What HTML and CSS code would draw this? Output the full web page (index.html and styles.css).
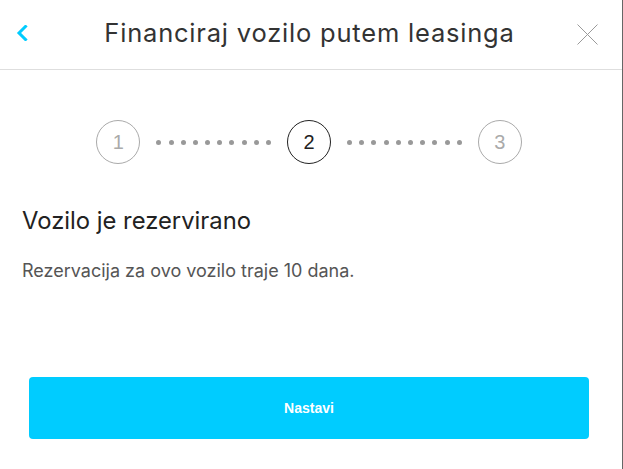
FILE: index.html
```html
<!DOCTYPE html>
<html lang="hr">
<head>
<meta charset="utf-8">
<link rel="stylesheet" href="styles.css">
</head>
<body>
<div class="modal">
  <header class="header">
    <button class="back" aria-label="Natrag">
      <svg width="12" height="16" viewBox="0 0 12 16"><path d="M9.5 1.5 L3 8 L9.5 14.5" fill="none" stroke="#00ccff" stroke-width="3" stroke-linecap="square"/></svg>
    </button>
    <h1 class="title">Financiraj vozilo putem leasinga</h1>
    <button class="close" aria-label="Zatvori">
      <svg width="21" height="21" viewBox="0 0 21 21"><path d="M0.5 0.5 L20.5 20.5 M20.5 0.5 L0.5 20.5" stroke="#9a9a9a" stroke-width="1"/></svg>
    </button>
  </header>
  <div class="steps">
    <div class="step">1</div>
    <div class="dots"><i></i><i></i><i></i><i></i><i></i><i></i><i></i><i></i><i></i><i></i></div>
    <div class="step active">2</div>
    <div class="dots"><i></i><i></i><i></i><i></i><i></i><i></i><i></i><i></i><i></i><i></i></div>
    <div class="step">3</div>
  </div>
  <section class="content">
    <h2 class="heading">Vozilo je rezervirano</h2>
    <p class="text">Rezervacija za ovo vozilo traje 10 dana.</p>
  </section>
  <div class="actions">
    <button class="primary">Nastavi</button>
  </div>
</div>
</body>
</html>
```
FILE: styles.css
```css
*, *::before, *::after {
  box-sizing: border-box;
}
html, body {
  margin: 0;
  padding: 0;
  background: #fff;
}
body {
  font-family: Inter, "Liberation Sans", Arial, sans-serif;
  width: 623px;
  height: 469px;
  overflow: hidden;
}
.modal {
  width: 623px;
  height: 469px;
  border-right: 1px solid #666;
  display: flex;
  flex-direction: column;
}
.header {
  height: 70px;
  flex: none;
  border-bottom: 1px solid #dedede;
  display: flex;
  align-items: center;
  justify-content: space-between;
  padding: 0 24px 4px 16px;
}
.header button {
  background: none;
  border: 0;
  padding: 0;
  display: flex;
  cursor: pointer;
}
.title {
  margin: 0 -5px 0 9px;
  font-size: 25.5px;
  font-weight: 400;
  color: #333;
  letter-spacing: 0.8px;
  line-height: normal;
}
.back { width: 12px; }
.close { width: 21px; margin-top: 4px; }
.steps {
  display: flex;
  align-items: center;
  justify-content: center;
  margin-top: 50px;
  padding-right: 4px;
}
.step {
  width: 44px;
  height: 44px;
  border: 1px solid #aaa;
  border-radius: 50%;
  display: flex;
  align-items: center;
  justify-content: center;
  color: #aaa;
  font-size: 20px;
  font-family: "Liberation Sans", Arial, sans-serif;
}
.step.active {
  border-color: #222;
  color: #222;
}
.dots {
  display: flex;
  gap: 7.2px;
  margin: 0 16px;
}
.dots i {
  width: 5px;
  height: 5px;
  border-radius: 50%;
  background: #999;
}
.content {
  padding: 0 22px;
  margin-top: 42px;
}
.heading {
  margin: 0;
  font-size: 23.8px;
  font-weight: 400;
  color: #222;
  line-height: 29px;
}
.text {
  margin: 25px 0 0;
  font-size: 18px;
  color: #555;
  line-height: 22px;
}
.actions {
  margin-top: auto;
  padding: 0 33px 30px 29px;
}
.primary {
  width: 100%;
  height: 62px;
  background: #00ccff;
  border: 0;
  border-radius: 4px;
  color: #fff;
  font-family: "Liberation Sans", Arial, sans-serif;
  font-weight: 700;
  font-size: 14px;
}
```
